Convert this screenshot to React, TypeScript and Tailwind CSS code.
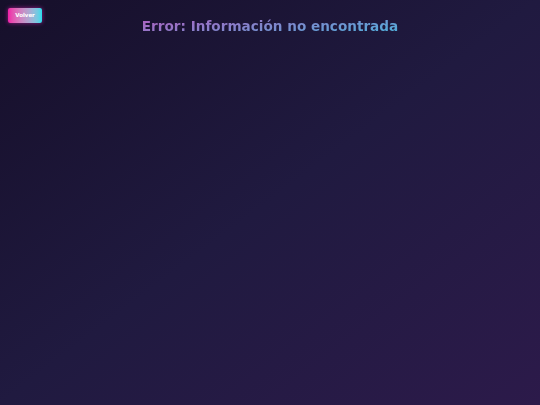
export default function App() {
  return (
    <div
      className="relative min-h-[405px] w-full overflow-hidden bg-gradient-to-br from-[#160f2a] via-[#201a40] to-[#2c1a4a]"
      style={{ fontFamily: '"DejaVu Sans", sans-serif' }}
    >
      <button className="absolute left-[8px] top-[8px] h-[15px] w-[34px] rounded-[2px] bg-gradient-to-r from-[#f01aa8] to-[#1cdcec] text-[5.5px] font-bold text-white shadow-[0_0_4px_rgba(240,40,200,0.6)]">
        Volver
      </button>
      <div className="flex justify-center pt-[17px]">
        <h1 className="bg-[linear-gradient(172deg,#a866c2_10%,#54aad8_90%)] bg-clip-text text-[13.6px] font-bold leading-[18px] text-transparent">
          Error: Información no encontrada
        </h1>
      </div>
    </div>
  );
}
